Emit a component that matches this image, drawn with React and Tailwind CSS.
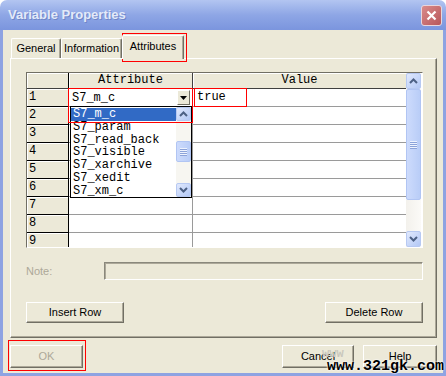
import React from "react";

const mono = "font-['Liberation_Mono','DejaVu_Sans_Mono',monospace] text-[12px]";

const Chevron = ({ up }) => (
  <svg width="9" height="6" viewBox="0 0 9 6">
    <path
      d={up ? "M1 5 L4.5 1.5 L8 5" : "M1 1 L4.5 4.5 L8 1"}
      fill="none"
      stroke="#4d6185"
      strokeWidth="2"
    />
  </svg>
);

const ScrollBtn = ({ up, small }) => (
  <div
    className={`flex w-[15px] shrink-0 items-center justify-center rounded-[2px] border border-[#b7c9f2] bg-gradient-to-br from-[#e1e9fd] to-[#b3c8f5] ${
      small ? "h-[14px]" : "h-[16px]"
    }`}
  >
    <Chevron up={up} />
  </div>
);

const Grip = () => (
  <div className="flex flex-col gap-[1px]">
    <div className="h-[1px] w-[7px] bg-[#eef3fe] shadow-[0_1px_0_#8ca3d9]" />
    <div className="h-[1px] w-[7px] bg-[#eef3fe] shadow-[0_1px_0_#8ca3d9]" />
    <div className="h-[1px] w-[7px] bg-[#eef3fe] shadow-[0_1px_0_#8ca3d9]" />
    <div className="h-[1px] w-[7px] bg-[#eef3fe] shadow-[0_1px_0_#8ca3d9]" />
  </div>
);

const Thumb = ({ className }) => (
  <div
    className={`flex w-[15px] shrink-0 items-center justify-center rounded-[2px] border border-[#b1c5f3] bg-gradient-to-r from-[#cddbfc] to-[#b9cdf7] ${className}`}
  >
    <Grip />
  </div>
);

const Button = ({ children, disabled, className }) => (
  <div
    className={`flex items-center justify-center border-t border-l border-white border-r border-b border-r-[#716f64] border-b-[#716f64] bg-[#ece9d8] shadow-[inset_-1px_-1px_0_#aca899] ${
      disabled ? "text-[#aca899]" : "text-black"
    } ${className}`}
  >
    {children}
  </div>
);

const Tab = ({ children, selected, className }) => (
  <div
    className={`flex items-center justify-center rounded-t-[2px] border-t border-l border-white border-r border-r-[#716f64] bg-[#ece9d8] shadow-[inset_-1px_0_0_#aca899] ${
      selected ? "relative z-10 -mb-[1px] h-[24px] pb-[3px]" : "h-[20px]"
    } ${className}`}
  >
    {children}
  </div>
);

const items = ["S7_m_c", "S7_param", "S7_read_back", "S7_visible", "S7_xarchive", "S7_xedit", "S7_xm_c"];
const rows = [1, 2, 3, 4, 5, 6, 7, 8, 9];

export default function App() {
  return (
    <div className="relative h-[376px] w-[446px] overflow-hidden bg-white font-['Liberation_Sans',Arial,sans-serif] text-[11px] text-black">
      <div className="flex h-full flex-col">
        {/* title bar */}
        <div className="flex h-[30px] shrink-0 items-center justify-between rounded-t-[7px] bg-gradient-to-b from-[#b3c5f1] via-[#8ea6e5] to-[#7b95de] pl-[8px] pr-[4px]">
          <span className="text-[13px] font-bold text-[#e3eaf9] [text-shadow:1px_1px_0_#6f86c8]">
            Variable Properties
          </span>
          <div className="flex h-[21px] w-[21px] items-center justify-center rounded-[3px] border border-[#e8d6dc] bg-gradient-to-br from-[#d98b8b] to-[#b8565a]">
            <svg width="11" height="11" viewBox="0 0 11 11">
              <path d="M1.5 1.5 L9.5 9.5 M9.5 1.5 L1.5 9.5" stroke="#fff" strokeWidth="2.2" />
            </svg>
          </div>
        </div>

        {/* body */}
        <div className="flex flex-1 flex-col border-x-[3px] border-b-[3px] border-[#8ea3e2] bg-[#ece9d8] pl-[7px] pr-[6px] pt-[5px]">
          {/* tabs */}
          <div className="flex h-[23px] shrink-0 items-end pl-[1px]">
            <Tab className="w-[50px]">General</Tab>
            <Tab className="w-[61px]">Information</Tab>
            <Tab selected className="w-[62px]">
              Attributes
            </Tab>
          </div>

          {/* panel */}
          <div className="flex h-[280px] shrink-0 flex-col border-t border-l border-white border-r border-b border-r-[#716f64] border-b-[#716f64] pl-[15px] pr-[13px] pt-[13px] shadow-[inset_-1px_-1px_0_#aca899]">
            {/* grid */}
            <div className={`flex h-[176px] w-[397px] shrink-0 border border-t-[#716f64] border-l-[#716f64] border-r-white border-b-white bg-white ${mono}`}>
              <div className="relative flex flex-1 flex-col overflow-hidden">
                {/* header */}
                <div className="flex h-[16px] shrink-0 border-b border-[#404040] leading-[15px]">
                  <div className="w-[42px] border-r border-black bg-[#ece9d8] shadow-[inset_1px_1px_0_#fff]" />
                  <div className="w-[124px] border-r border-[#404040] bg-[#ece9d8] text-center shadow-[inset_1px_1px_0_#fff]">
                    Attribute
                  </div>
                  <div className="flex-1 bg-[#ece9d8] text-center shadow-[inset_1px_1px_0_#fff]">Value</div>
                </div>
                {rows.map((n) => (
                  <div key={n} className="flex h-[18px] shrink-0">
                    <div className="w-[42px] border-b border-r border-black bg-[#ece9d8] pl-[2px] leading-[17px] shadow-[inset_1px_1px_0_#fff]">
                      {n}
                    </div>
                    <div className="w-[124px] border-b border-r border-[#9a9a9a] bg-white">
                      {n === 1 && (
                        <div className="flex h-full items-center">
                          <span className="flex-1 pl-[3px]">S7_m_c</span>
                          <div className="mr-[2px] flex h-[15px] w-[13px] items-center justify-center border-t border-l border-white border-r border-b border-r-[#716f64] border-b-[#716f64] bg-[#ece9d8]">
                            <svg width="7" height="4" viewBox="0 0 7 4">
                              <path d="M0 0 H7 L3.5 4 Z" fill="#000" />
                            </svg>
                          </div>
                        </div>
                      )}
                    </div>
                    <div className="flex-1 border-b border-[#9a9a9a] bg-white pl-[4px] leading-[17px]">
                      {n === 1 && "true"}
                    </div>
                  </div>
                ))}

                {/* dropdown list */}
                <div className="absolute left-[43px] top-[33px] flex h-[92px] w-[122px] border border-black bg-white">
                  <div className="flex flex-1 flex-col overflow-hidden pt-[1px]">
                    {items.map((it, i) => (
                      <div
                        key={it}
                        className={`h-[12.8px] shrink-0 pl-[2px] leading-[13px] ${
                          i === 0 ? "bg-[#316ac5] text-white" : ""
                        }`}
                      >
                        {it}
                      </div>
                    ))}
                  </div>
                  <div className="flex w-[15px] flex-col bg-[#f7f6f1]">
                    <ScrollBtn up small />
                    <div className="h-[20px] shrink-0" />
                    <Thumb className="h-[21px]" />
                    <div className="flex-1" />
                    <ScrollBtn small />
                  </div>
                </div>
              </div>

              {/* grid scrollbar */}
              <div className="mr-[1px] flex w-[15px] flex-col bg-gradient-to-r from-[#f3f1ec] to-[#fbfaf7]">
                <ScrollBtn up />
                <Thumb className="h-[111px]" />
                <div className="flex-1" />
                <ScrollBtn />
              </div>
            </div>

            {/* note */}
            <div className="mt-[14px] flex h-[18px] shrink-0 items-center">
              <span className="w-[78px] text-[#aca899]">Note:</span>
              <div className="h-[18px] w-[319px] border border-t-[#8a887c] border-l-[#8a887c] border-r-white border-b-white bg-[#ece9d8] shadow-[inset_1px_1px_0_#aca899]" />
            </div>

            {/* row buttons */}
            <div className="mt-[22px] flex shrink-0 justify-between">
              <Button className="h-[21px] w-[98px]">Insert Row</Button>
              <Button className="h-[21px] w-[98px]">Delete Row</Button>
            </div>
          </div>

          {/* dialog buttons */}
          <div className="mt-[7px] flex shrink-0 items-center gap-[9px]">
            <Button disabled className="h-[23px] w-[73px]">
              OK
            </Button>
            <Button className="ml-auto h-[23px] w-[72px]">Cancel</Button>
            <Button className="h-[23px] w-[74px]">Help</Button>
          </div>
        </div>
      </div>

      {/* annotation boxes */}
      <div className="pointer-events-none absolute left-[122px] top-[33px] h-[29px] w-[65px] border border-[#ff0000]" />
      <div className="pointer-events-none absolute left-[68px] top-[88px] h-[35px] w-[125px] border border-[#ff0000]" />
      <div className="pointer-events-none absolute left-[194px] top-[88px] h-[19px] w-[53px] border border-[#ff0000]" />
      <div className="pointer-events-none absolute left-[8px] top-[340px] h-[31px] w-[78px] border border-[#ff0000]" />

      {/* watermark */}
      <div className="pointer-events-none absolute left-[322px] top-[348px] font-['Liberation_Mono',monospace] text-[12px] font-bold leading-[12px] text-[#c9c7bd]">
        www
      </div>
      <div className="pointer-events-none absolute left-[327px] top-[358px] font-['Liberation_Mono',monospace] text-[15px] font-bold leading-[17px] text-black [text-shadow:0_0_2px_#fff,0_0_2px_#fff]">
        www.321gk.com
      </div>
    </div>
  );
}
